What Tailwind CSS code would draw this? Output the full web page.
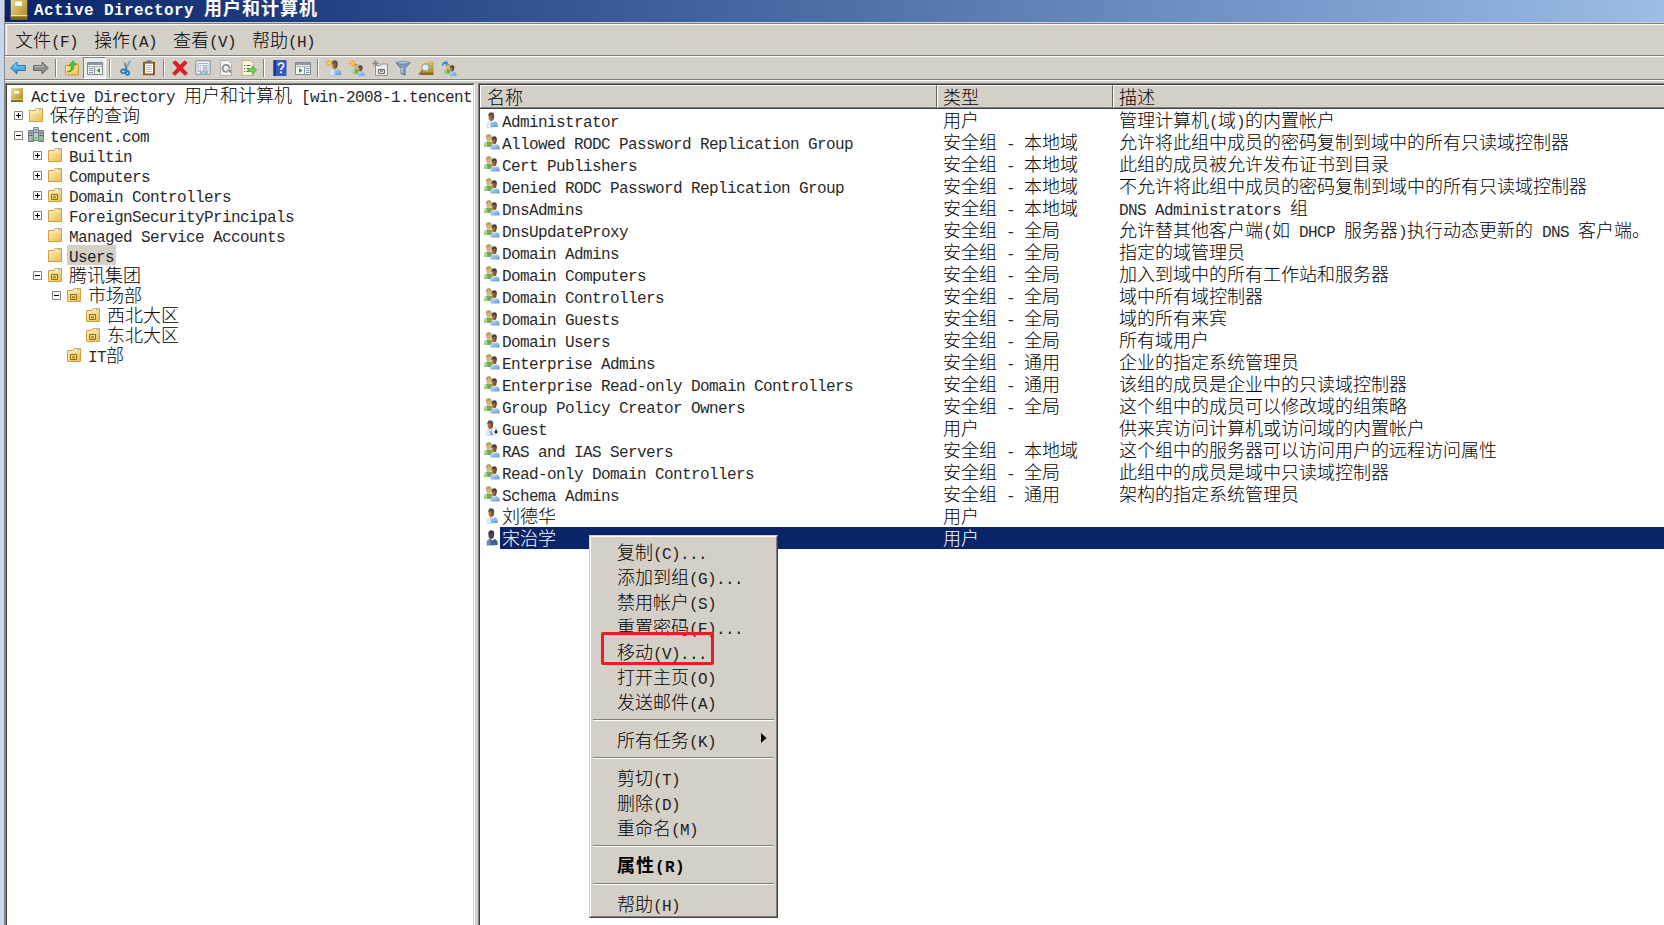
<!DOCTYPE html>
<html lang="zh-CN">
<head>
    <meta charset="UTF-8">
    <meta name="viewport" content="width=device-width, initial-scale=1.0">
    <title>Active Directory 用户和计算机</title>
    <script src="https://cdn.jsdelivr.net/npm/@tailwindcss/browser@4"></script>
</head>
<body class="w-[1664px] h-[925px] overflow-hidden bg-[#d4d0c8] font-['Noto_Sans_CJK_SC',sans-serif] font-light text-[18px] text-black">

    <!-- Icon symbols -->
    <svg class="absolute w-0 h-0">
        <defs>
            <linearGradient id="gFolder" x1="0" y1="0" x2="1" y2="1"><stop offset="0" stop-color="#fff0ad"/><stop offset="1" stop-color="#e9bb5c"/></linearGradient>
            <linearGradient id="gBook" x1="0" y1="0" x2="1" y2="1"><stop offset="0" stop-color="#f2e49a"/><stop offset="1" stop-color="#a88416"/></linearGradient>
            <linearGradient id="gBlue" x1="0" y1="0" x2="0" y2="1"><stop offset="0" stop-color="#8fdcff"/><stop offset="1" stop-color="#1b86d8"/></linearGradient>
            <linearGradient id="gBody" x1="0" y1="0" x2="1" y2="1"><stop offset="0" stop-color="#c4e0fa"/><stop offset="1" stop-color="#5b94d6"/></linearGradient>
            <linearGradient id="gHead" x1="0" y1="0" x2="1" y2="0"><stop offset="0" stop-color="#c98d55"/><stop offset="1" stop-color="#5d3d24"/></linearGradient>
        </defs>
        <symbol id="book" viewBox="0 0 16 16">
            <path d="M2 1h12v14H2z" fill="url(#gBook)"/>
            <path d="M2 12.5h12V15H2z" fill="#8a6a10"/><path d="M2 12.3h12v.8H2z" fill="#efe2a6"/>
            <path d="M4.5 3.5h6v3.5h-6z" fill="#fffef2" stroke="#c2a848" stroke-width=".6"/>
        </symbol>
        <symbol id="folder" viewBox="0 0 16 16">
            <path d="M1.5 14.5v-11h5l1.5-1.800h6.500v12.800z" fill="url(#gFolder)" stroke="#cfa04a"/>
            <path d="M8.600 2.400h5.200v1.200H8.600z" fill="#fff"/><path d="M11 2.400h2.600v1H11z" fill="#7ba8dc"/>
            <path d="M2 5h12" stroke="#fff3bf" stroke-width=".8"/>
        </symbol>
        <symbol id="ou" viewBox="0 0 16 16">
            <use href="#folder"/>
            <path d="M4.500 7.500h6v5h-6z" fill="#f0d87a" stroke="#8f6f14"/><path d="M6 9.300h3v2H6z" fill="#a58420"/>
        </symbol>
        <symbol id="domain" viewBox="0 0 16 16">
            <path d="M5.500.5h5v13h-5z" fill="#c6ced4" stroke="#77828a"/>
            <path d="M.5 3.500h5v11h-5z" fill="#a9b4bb" stroke="#6d7880"/>
            <path d="M10.500 3.500h5v11h-5z" fill="#a9b4bb" stroke="#6d7880"/>
            <path d="M1.500 6h3M1.500 8.500h3M11.500 6h3M11.500 8.500h3M6.500 3h3M6.500 5.500h3" stroke="#4b5860"/>
            <path d="M3 12h2v2H3zM7 10h2v2H7zM12 12h2v2h-2z" fill="#4bd825"/>
        </symbol>
        <symbol id="user" viewBox="0 0 16 16">
            <path d="M3 15.500c-.6-4 .3-6 3.200-6.500l2.200 1.500L10.500 9c2.600.6 3.500 2.500 3.200 6z" fill="url(#gBody)"/>
            <path d="M3.200 15c-.5-3.300.5-5.300 2.800-5.800l1 5.800z" fill="#dcecf9"/>
            <ellipse cx="7.200" cy="5" rx="2.800" ry="4" fill="url(#gHead)"/>
            <path d="M4.300 4C4.300.8 6 .2 7.500.3c2.500.1 3.300 2.200 2.500 5.200L8.500 3z" fill="#57504b"/>
        </symbol>
        <symbol id="userSel" viewBox="0 0 16 16">
            <path d="M3 15.500c-.6-4 .3-6 3.200-6.500l2.200 1.500L10.500 9c2.600.6 3.500 2.500 3.200 6z" fill="#38609f"/>
            <path d="M3.200 15c-.5-3.300.5-5.300 2.800-5.800l1 5.800z" fill="#7388b4"/>
            <ellipse cx="7.200" cy="5" rx="2.800" ry="4" fill="#4c4758"/>
            <path d="M4.300 4C4.300.8 6 .2 7.500.3c2.500.1 3.300 2.200 2.500 5.200L8.500 3z" fill="#2f3558"/>
        </symbol>
        <symbol id="guest" viewBox="0 0 16 16">
            <use href="#user" x="-1"/>
            <circle cx="12" cy="11.500" r="3.800" fill="#fff" stroke="#b9b9b9" stroke-width=".5"/>
            <path d="M11.300 9.500h1.400v2h1.500L12 14l-2.200-2.500h1.500z" fill="#111"/>
        </symbol>
        <symbol id="group" viewBox="0 0 16 16">
            <path d="M.2 13c-.3-3.500.5-5.200 3-5.500h3.300c1.500.4 2 2 2 5.500z" fill="#6fae4e"/>
            <path d="M.4 12.800c-.2-3 .5-4.600 2.300-5l.6 5z" fill="#b4d99b"/>
            <ellipse cx="4.800" cy="4" rx="2.700" ry="3.400" fill="#dcb184"/>
            <path d="M1.800 4C1.700 1 3.200.2 5 .3c2 0 3 1.500 2.700 4L6 2.300C4.500 3 3 2.800 1.800 4z" fill="#b3a15a"/>
            <path d="M6.500 15.600c-.3-3.500.4-5 2.700-5.300l1.300 1 1.500-1c3 .3 3.900 2 3.700 5.300z" fill="url(#gBody)"/>
            <ellipse cx="10" cy="6.700" rx="2.600" ry="3.500" fill="url(#gHead)"/>
            <path d="M7.600 6C7.500 3 8.700 2.300 10.200 2.300c2.400 0 3.200 1.700 2.400 4.700L11 4.800z" fill="#4a4541"/>
        </symbol>
        <symbol id="star" viewBox="0 0 16 16">
            <path d="M4.500 0v9M0 4.500h9M1.300 1.300l6.400 6.400M7.700 1.300L1.300 7.700" stroke="#f29a1d" stroke-width="1.300"/><circle cx="4.500" cy="4.500" r="1.900" fill="#ffd24a"/>
        </symbol>
        <symbol id="back" viewBox="0 0 16 16">
            <path d="M.6 8L7 2v3.500h8.400v5H7V14z" fill="url(#gBlue)" stroke="#1c6db0" stroke-width=".9"/>
        </symbol>
        <symbol id="forward" viewBox="0 0 16 16">
            <path d="M15.400 8L9 2v3.500H.6v5H9V14z" fill="#8e8e8e" stroke="#5f5f5f" stroke-width=".9"/><path d="M1.500 6.500h8.400v-2" stroke="#bdbdbd" fill="none"/>
        </symbol>
        <symbol id="up" viewBox="0 0 16 16">
            <path d="M1.500 15V5.500h5l1-1.500h7v11z" fill="url(#gFolder)" stroke="#c99a3c"/>
            <path d="M3 12c3.500-1 4.500-3 4.300-6.500L4.500 6 9 .8l3.500 4-2.500.1c0 4.600-2.200 7.200-7 7.100z" fill="#48c82c" stroke="#2a8f1a" stroke-width=".6"/>
        </symbol>
        <symbol id="treePane" viewBox="0 0 16 16">
            <path d="M.5 2.500h15v12H.5z" fill="#f5f6f7" stroke="#7b8793"/><path d="M1 3h14v2H1z" fill="#8d9aa8"/>
            <path d="M1 6.500h14" stroke="#a8b2bc"/><path d="M7.500 7v7.500M2 8.500h4M2 10.500h4M2 12.500h4" stroke="#8895a2"/>
            <path d="M13 8v5l-3.500-2.500z" fill="#30a818"/>
        </symbol>
        <symbol id="actPane" viewBox="0 0 16 16">
            <path d="M.5 2.500h15v12H.5z" fill="#f5f6f7" stroke="#7b8793"/><path d="M1 3h14v2H1z" fill="#8d9aa8"/>
            <path d="M1 6.500h14" stroke="#a8b2bc"/><path d="M9.500 7v7.500M11 8.500h3.500M11 10.500h3.500M11 12.500h3.500" stroke="#8895a2"/>
            <path d="M4 8v5l3.500-2.500z" fill="#30a818"/>
        </symbol>
        <symbol id="cut" viewBox="0 0 16 16">
            <path d="M12.500.5L7 10" stroke="#7fa6c6" stroke-width="1.800"/><path d="M6.500 2.500L9 10.500" stroke="#4f7c9f" stroke-width="1.500"/>
            <ellipse cx="5.400" cy="11.300" rx="2.300" ry="1.900" fill="none" stroke="#1277c8" stroke-width="1.600"/><ellipse cx="9.600" cy="13" rx="1.500" ry="2" fill="none" stroke="#1277c8" stroke-width="1.600"/>
        </symbol>
        <symbol id="clip" viewBox="0 0 16 16">
            <path d="M2 1.800h12v13.400H2z" fill="#8d5428"/><path d="M4 3.500h8v10H4z" fill="#fbfbf8"/>
            <path d="M5.500.5h5v2.800h-5z" fill="#6b6f73"/><path d="M5.200 5.500h5.600M5.200 7.500h5.600M5.200 9.500h5.600M5.200 11.500h5.600" stroke="#b9bdc2"/>
        </symbol>
        <symbol id="del" viewBox="0 0 16 16">
            <path d="M.8 2.500L3.500.8 8 5.300 12.800.8l2.300 2L10.500 8l5 5-2.500 2.500L8 10.500l-5 5L.6 13.200 5.500 8z" fill="#e21d24" stroke="#a80f14" stroke-width=".6"/>
        </symbol>
        <symbol id="props" viewBox="0 0 16 16">
            <path d="M.8.8h14.400v13.400H.8z" fill="#f4f6f8" stroke="#7f8b98"/><path d="M3 3.500h10v8H3z" fill="#fff" stroke="#8fa0b3" stroke-width=".8"/>
            <path d="M4.500 5.800h1.500M4.500 8h1.500M4.500 10h1.500M7.500 5.800H12M7.500 8H12M7.500 10H12" stroke="#6f88a4"/><path d="M5 12.800h3M9 12.800h4" stroke="#36a5da"/>
        </symbol>
        <symbol id="refresh" viewBox="0 0 16 16">
            <path d="M2.500.5h8l3 3v12h-11z" fill="#f4f4f4" stroke="#b0b0b0"/>
            <path d="M11.500 8.500a3.500 3.500 0 1 0-2 3" fill="none" stroke="#8a8a8a" stroke-width="1.800"/><path d="M8 9.500h5v4z" fill="#8a8a8a"/>
        </symbol>
        <symbol id="export" viewBox="0 0 16 16">
            <path d="M1 .6h8.500l3 3v11.800H1z" fill="#fdf8dc" stroke="#b9ac7c" stroke-width=".9"/>
            <path d="M3 5.500h1.200M3 8.500h1.200M3 11.500h1.200M5.500 5.500h4M5.500 8.500h3M5.500 11.500h3" stroke="#666"/>
            <path d="M7 8.600h4V5.800l4.700 4.200-4.700 4.200v-2.800H7z" fill="#6bd04b" stroke="#3c9a2a" stroke-width=".6"/>
        </symbol>
        <symbol id="help" viewBox="0 0 16 16">
            <path d="M1.500 0h13v16h-13z" fill="#3558c4"/><path d="M1.500 0H4v16H1.500z" fill="#1d3793"/>
            <path d="M6.500 5.500C6.500 3.500 7.700 3 9 3c1.500 0 2.600.8 2.600 2.300C11.600 7.500 9 7.600 9 10" fill="none" stroke="#fff" stroke-width="1.700"/><path d="M8.100 11.500h1.900v1.800H8.100z" fill="#fff"/>
        </symbol>
        <symbol id="newUser" viewBox="0 0 16 16">
            <use href="#user" x="1.500" width="16" height="16"/><use href="#star" x="-.5" y="-.5" width="12" height="12"/>
        </symbol>
        <symbol id="newGroup" viewBox="0 0 16 16">
            <use href="#group" x="3.500" y="3.500" width="12.500" height="12.500"/><use href="#star" width="12" height="12"/>
        </symbol>
        <symbol id="newOu" viewBox="0 0 16 16">
            <path d="M3.500 15.500V5.500h5l1-1.500h6v11.500z" fill="#ececec" stroke="#929292"/>
            <path d="M6.500 9.500h6v4h-6z" fill="#d8d8d8" stroke="#6a6a6a"/><path d="M8 11h3" stroke="#555"/>
            <path d="M3.500 0v7M0 3.500h7M1 1l5 5M6 1L1 6" stroke="#8c8c8c"/>
        </symbol>
        <symbol id="filter" viewBox="0 0 16 16">
            <path d="M.8 2.500h14.400L10 8.500v6.500l-4-1.500v-5z" fill="#7f9fbe" stroke="#47647f" stroke-width=".8"/>
            <ellipse cx="8" cy="2.700" rx="6.800" ry="1.300" fill="#b8d0e4" stroke="#47647f" stroke-width=".6"/><path d="M7 8v5" stroke="#d5e5f2"/>
        </symbol>
        <symbol id="find" viewBox="0 0 16 16">
            <path d="M2.500 1.500h13v13h-13z" fill="url(#gBook)"/><path d="M2.500 12.500h13V15h-13z" fill="#8a6a10"/>
            <path d="M5 10.500L1 14.500" stroke="#a87434" stroke-width="1.800"/>
            <circle cx="7.500" cy="7.500" r="3.600" fill="#dceffa" stroke="#8a98a4" stroke-width="1.100"/>
        </symbol>
        <symbol id="addGroup" viewBox="0 0 16 16">
            <use href="#group" x="3" y="3.500" width="13" height="12.500"/>
            <path d="M.8 6C.8 3 2.200 1.800 4.500 1.800V.2L7.500 3 4.500 5.600V4C3 4 2.300 4.500 2 6z" fill="#2f8fd8"/>
        </symbol>
    </svg>

    <div class="flex h-full">
        <!-- Window edge -->
        <div class="w-1 shrink-0 bg-[#c9d5ec]"></div>
        <div class="w-px shrink-0 bg-[#8b8b8b]"></div>

        <div class="flex flex-col flex-1 min-w-0">
            <!-- Title bar -->
            <div class="flex items-start h-[22px] shrink-0 overflow-hidden bg-linear-to-r from-[#0a246a] to-[#9bbde6] pl-[3px] text-white font-bold">
                <svg class="w-[22px] h-[21px] shrink-0" viewBox="0 3 16 13" preserveAspectRatio="none"><use href="#book" x="0" y="0" width="16" height="16"/></svg>
                <div class="ml-1 h-4 leading-[14px] tracking-[1px] whitespace-pre" data-text="Active Directory 用户和计算机"></div>
            </div>
            <div class="h-px shrink-0 bg-[#d4d0c8]"></div>
            <div class="h-px shrink-0 bg-[#808080]"></div>

            <!-- Menu bar -->
            <div class="flex h-[31px] shrink-0 ml-px border-t border-l border-white leading-[28px]">
                <div class="px-2" data-text="文件(F)"></div>
                <div class="px-2" data-text="操作(A)"></div>
                <div class="px-2" data-text="查看(V)"></div>
                <div class="px-2" data-text="帮助(H)"></div>
            </div>
            <div class="h-px shrink-0 bg-[#808080]"></div>

            <!-- Toolbar -->
            <div id="toolbar" class="flex h-[23px] shrink-0 border-t border-white pl-px"></div>
            <div class="h-px shrink-0 bg-[#808080]"></div>
            <div class="h-px shrink-0 bg-white"></div>
            <div class="h-[2px] shrink-0"></div>

            <!-- Panes -->
            <div class="flex flex-1 min-h-0">
                <div class="w-[470px] shrink-0 border-t border-l border-[#808080] border-r border-r-white">
                    <div id="tree" class="h-full bg-white border-t border-l border-[#404040] border-r border-r-[#d4d0c8] overflow-hidden"></div>
                </div>
                <div class="w-[3px] shrink-0"></div>
                <div class="flex-1 min-w-0 border-t border-l border-[#808080]">
                    <div class="h-full bg-white border-t border-l border-[#404040] overflow-hidden">
                        <div class="flex h-6 bg-[#d4d0c8] border-b border-[#404040] leading-[20px]">
                            <div class="w-[457px] pl-[6px] border-t border-l border-white border-b border-b-[#808080] border-r border-r-[#606060]">名称</div>
                            <div class="w-[176px] pl-[5px] border-t border-l border-white border-b border-b-[#808080] border-r border-r-[#606060]">类型</div>
                            <div class="flex-1 pl-[5px] border-t border-l border-white border-b border-b-[#808080]">描述</div>
                        </div>
                        <div id="list"></div>
                    </div>
                </div>
            </div>
        </div>
    </div>

    <!-- Context menu -->
    <div class="absolute left-[589px] top-[535px] w-[189px] h-[383px] bg-[#d4d0c8] border border-[#d4d0c8] border-r-[#404040] border-b-[#404040]">
        <div id="menu" class="h-full border border-white border-r-[#808080] border-b-[#808080] pt-[2px]"></div>
    </div>
    <!-- Highlight box -->
    <div class="absolute left-[601px] top-[632px] w-[113px] h-[33px] border-3 border-[#ed1c24] rounded-[2px]"></div>

    <script>
        // CJK glyphs are 18px wide, Latin ones 9px
        function text(s) {
            return s.replace(/[\x20-\x7e]+/g, m => `<span class="font-['Liberation_Mono',monospace] font-normal text-[16px] leading-none tracking-[-0.6px] whitespace-pre opacity-85">${m}</span>`);
        }

        function boldText(s) {
            return s.replace(/[\x20-\x7e]+/g, m => `<span class="font-['Liberation_Mono',monospace] font-bold text-[16px] leading-none tracking-[0.4px] whitespace-pre">${m}</span>`);
        }

        function icon(name) {
            return `<svg class="w-4 h-4 shrink-0"><use href="#${name}"/></svg>`;
        }

        document.querySelectorAll('[data-text]').forEach(el => {
            const bold = el.parentElement.classList.contains('font-bold');
            el.innerHTML = bold ? boldText(el.dataset.text) : text(el.dataset.text);
        });

        // Toolbar ('|' is a separator, '*' marks a pressed button)
        const tools = ['back', 'forward', '|', 'up', '*treePane', '|', 'cut', 'clip', '|', 'del', 'props', 'refresh', 'export', '|',
            'help', 'actPane', '|', 'newUser', 'newGroup', 'newOu', 'filter', 'find', 'addGroup'];
        document.getElementById('toolbar').innerHTML = tools.map(t => {
            if (t === '|') return '<div class="w-2 h-[18px] my-[2px] flex justify-center"><div class="w-[2px] bg-[#808080] border-r border-white"></div></div>';
            if (t[0] === '*') return `<div class="w-[23px] h-[22px] flex items-center justify-center bg-[#ecebe7] border border-[#808080] border-r-white border-b-white">${icon(t.slice(1))}</div>`;
            return `<div class="w-[23px] h-[22px] flex items-center justify-center">${icon(t)}</div>`;
        }).join('');

        // Tree: level, expander, icon, label
        const nodes = [
            [0, '', 'book', 'Active Directory 用户和计算机 [win-2008-1.tencent'],
            [1, '+', 'folder', '保存的查询'],
            [1, '-', 'domain', 'tencent.com'],
            [2, '+', 'folder', 'Builtin'],
            [2, '+', 'folder', 'Computers'],
            [2, '+', 'ou', 'Domain Controllers'],
            [2, '+', 'folder', 'ForeignSecurityPrincipals'],
            [2, '', 'folder', 'Managed Service Accounts'],
            [2, '', 'folder', 'Users'],
            [2, '-', 'ou', '腾讯集团'],
            [3, '-', 'ou', '市场部'],
            [4, '', 'ou', '西北大区'],
            [4, '', 'ou', '东北大区'],
            [3, '', 'ou', 'IT部']
        ];
        document.getElementById('tree').innerHTML = nodes.map(([level, exp, ic, label]) => {
            const plus = exp === '+' ? '<path d="M4.5 2v5" stroke="#000"/>' : '';
            const box = exp ? `<svg class="w-[9px] h-[9px]"><path d="M.5.5h8v8h-8z" fill="#fff" stroke="#808080"/><path d="M2 4.5h5" stroke="#000"/>${plus}</svg>` : '';
            const cell = level ? `<div class="w-[19px] pt-px flex items-center justify-center shrink-0">${box}</div>` : '';
            const bg = label === 'Users' ? 'bg-[#d4d0c8]' : '';
            return `<div class="flex h-5 leading-[18px]" style="padding-left:${level ? 2 + (level - 1) * 19 : 2}px">${cell}
                <div class="w-5 flex items-center shrink-0">${icon(ic)}</div>
                <div class="px-[2px] whitespace-nowrap ${bg}">${text(label)}</div></div>`;
        }).join('');

        // List: icon, name, type, description
        const rows = [
            ['user', 'Administrator', '用户', '管理计算机(域)的内置帐户'],
            ['group', 'Allowed RODC Password Replication Group', '安全组 - 本地域', '允许将此组中成员的密码复制到域中的所有只读域控制器'],
            ['group', 'Cert Publishers', '安全组 - 本地域', '此组的成员被允许发布证书到目录'],
            ['group', 'Denied RODC Password Replication Group', '安全组 - 本地域', '不允许将此组中成员的密码复制到域中的所有只读域控制器'],
            ['group', 'DnsAdmins', '安全组 - 本地域', 'DNS Administrators 组'],
            ['group', 'DnsUpdateProxy', '安全组 - 全局', '允许替其他客户端(如 DHCP 服务器)执行动态更新的 DNS 客户端。'],
            ['group', 'Domain Admins', '安全组 - 全局', '指定的域管理员'],
            ['group', 'Domain Computers', '安全组 - 全局', '加入到域中的所有工作站和服务器'],
            ['group', 'Domain Controllers', '安全组 - 全局', '域中所有域控制器'],
            ['group', 'Domain Guests', '安全组 - 全局', '域的所有来宾'],
            ['group', 'Domain Users', '安全组 - 全局', '所有域用户'],
            ['group', 'Enterprise Admins', '安全组 - 通用', '企业的指定系统管理员'],
            ['group', 'Enterprise Read-only Domain Controllers', '安全组 - 通用', '该组的成员是企业中的只读域控制器'],
            ['group', 'Group Policy Creator Owners', '安全组 - 全局', '这个组中的成员可以修改域的组策略'],
            ['guest', 'Guest', '用户', '供来宾访问计算机或访问域的内置帐户'],
            ['group', 'RAS and IAS Servers', '安全组 - 本地域', '这个组中的服务器可以访问用户的远程访问属性'],
            ['group', 'Read-only Domain Controllers', '安全组 - 全局', '此组中的成员是域中只读域控制器'],
            ['group', 'Schema Admins', '安全组 - 通用', '架构的指定系统管理员'],
            ['user', '刘德华', '用户', ''],
            ['userSel', '宋治学', '用户', '']
        ];
        document.getElementById('list').innerHTML = rows.map(([ic, name, type, desc]) => {
            const sel = ic === 'userSel' ? 'bg-[#0a246a] text-white' : '';
            return `<div class="flex h-[22px] leading-[20px] whitespace-nowrap">
                <div class="w-5 pl-1 flex items-center shrink-0">${icon(ic)}</div>
                <div class="flex flex-1 ${sel}">
                    <div class="w-[437px] pl-[2px] shrink-0">${text(name)}</div>
                    <div class="w-[176px] pl-[6px] shrink-0">${text(type)}</div>
                    <div class="pl-[6px]">${text(desc)}</div>
                </div></div>`;
        }).join('');

        // Context menu
        const items = ['复制(C)...', '添加到组(G)...', '禁用帐户(S)', '重置密码(E)...', '移动(V)...', '打开主页(O)', '发送邮件(A)', '|',
            '所有任务(K)', '|', '剪切(T)', '删除(D)', '重命名(M)', '|', '属性(R)', '|', '帮助(H)'];
        document.getElementById('menu').innerHTML = items.map(t => {
            if (t === '|') return '<div class="h-[13px] pt-[5px] px-[2px]"><div class="h-[2px] bg-[#808080] border-b border-white"></div></div>';
            const arrow = t.startsWith('所有') ? '<svg class="w-[6px] h-[10px] mr-2 mb-1"><path d="M0 0l5.500 5L0 10z"/></svg>' : '';
            if (t.startsWith('属性')) return `<div class="h-[25px] leading-[23px] pl-[26px] font-bold tracking-[1px]">${boldText(t)}</div>`;
            return `<div class="h-[25px] leading-[25px] pl-[26px] pr-px flex justify-between items-center"><span>${text(t)}</span>${arrow}</div>`;
        }).join('');
    </script>
</body>
</html>
